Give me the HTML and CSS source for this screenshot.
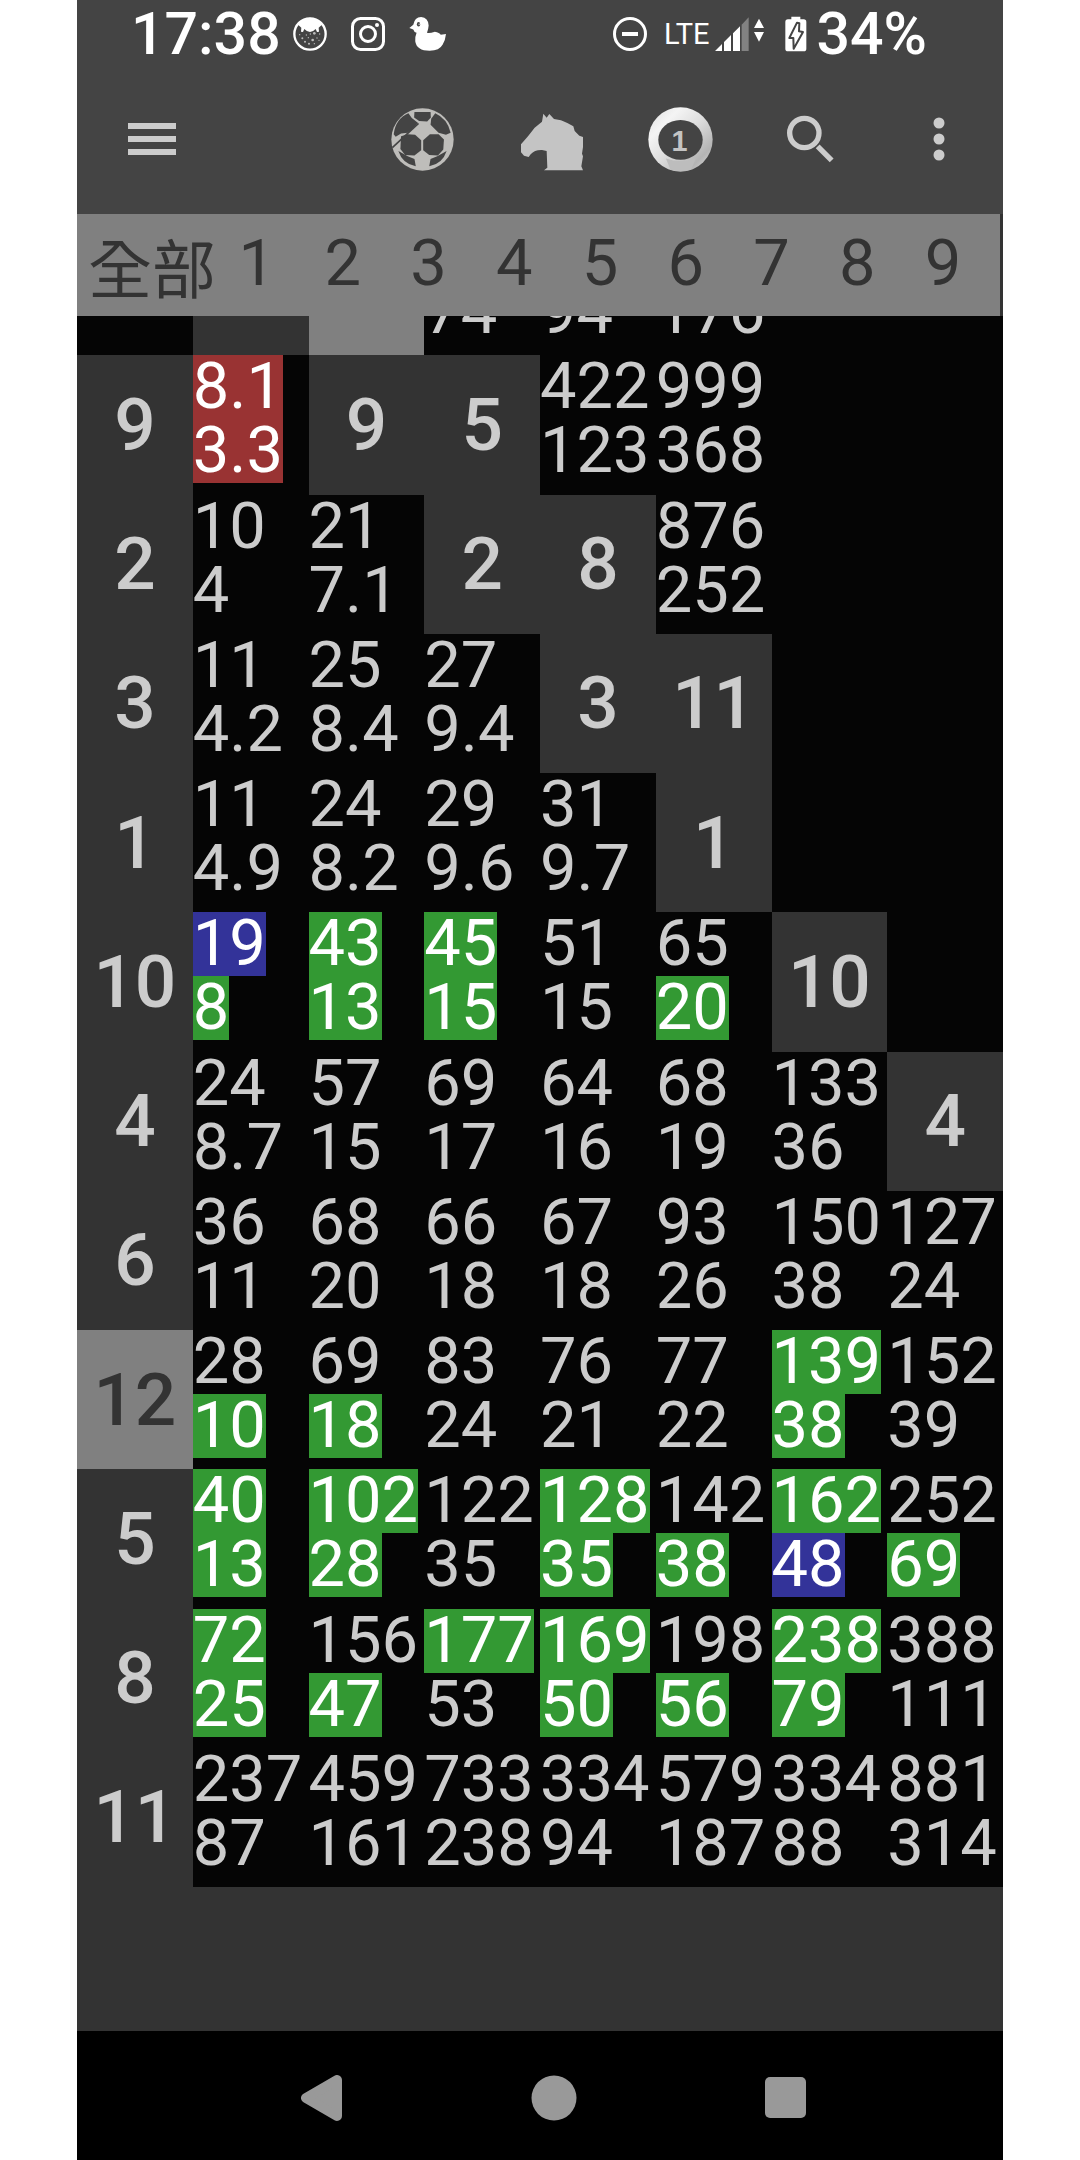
FILE: index.html
```html
<!DOCTYPE html>
<html lang="zh-Hant">
<head>
  <meta charset="utf-8">
  <meta name="viewport" content="width=device-width, initial-scale=1">
  <title>全部</title>
  <link rel="stylesheet" href="styles.css">
</head>
<body>
  <div class="phone">
    <div class="status">
      <span class="clock">17:38</span>
      <div class="notices">
        <svg width="34" height="34" viewBox="698 50 102 102">
          <circle cx="749" cy="101" r="47" fill="none" stroke="#fff" stroke-width="7"/>
          <path d="M706 84Q722 52 749 52Q776 52 792 84L784 74L775 82L776 94L770 95L766 86Q749 104 732 86L728 95L722 94L723 82L714 74Z" fill="#fff"/>
          <g fill="#bbb">
            <circle cx="718" cy="103" r="2"/><circle cx="726" cy="114" r="3"/><circle cx="738" cy="104" r="2"/>
            <circle cx="750" cy="101" r="2"/><circle cx="762" cy="99" r="4"/><circle cx="778" cy="101" r="2"/>
            <circle cx="744" cy="112" r="2"/><circle cx="757" cy="119" r="4"/><circle cx="770" cy="113" r="2"/>
            <circle cx="734" cy="124" r="3"/><circle cx="746" cy="130" r="3"/><circle cx="762" cy="130" r="2"/>
            <circle cx="776" cy="120" r="2"/>
          </g>
        </svg>
        <svg width="34" height="34" viewBox="0 0 34 34" fill="none" stroke="#fff">
          <rect x="1.5" y="1.5" width="31" height="31" rx="8" stroke-width="3"/>
          <circle cx="17" cy="17" r="7.5" stroke-width="3"/>
          <circle cx="26" cy="8" r="2" fill="#fff" stroke="none"/>
        </svg>
        <svg width="38" height="34" viewBox="1048 50 114 104">
          <path d="M1048 84L1060 74Q1064 50 1084 50Q1106 52 1107 76Q1106 88 1102 98Q1110 100 1126 95Q1140 98 1144 104L1160 102Q1158 122 1150 134Q1140 153 1110 153Q1070 153 1066 124Q1065 110 1070 98Q1062 96 1060 88Z" fill="#fff"/>
          <ellipse cx="1076" cy="72" rx="5" ry="7" fill="#444"/>
          <circle cx="1078" cy="72" r="2" fill="#fff"/>
        </svg>
      </div>
      <svg class="dnd" width="34" height="34" viewBox="0 0 34 34" fill="none" stroke="#fff">
        <circle cx="17" cy="17" r="15.5" stroke-width="3"/>
        <path d="M9 17H25" stroke-width="4"/>
      </svg>
      <span class="lte">LTE</span>
      <svg class="signal" width="50" height="36" viewBox="525 50 150 104">
        <path d="M525 153L546 132V153ZM552 126L573 105V153H552ZM579 100L600 79V153H579Z" fill="#fff"/>
        <path d="M605 74L626 52V153H605Z" fill="#828282"/>
        <path d="M657 56L672 84H642ZM657 125L642 96H672Z" fill="#fff"/>
      </svg>
      <svg class="battery" width="22" height="36" viewBox="734 49 66 106">
        <path d="M753 50H780V58H790Q798 58 798 66V146Q798 154 790 154H743Q735 154 735 146V66Q735 58 743 58H753Z" fill="#fff"/>
        <path d="M770 68L747 114L759 114L760 146L788 96L776 94L777 70Z" fill="#fff" stroke="#444" stroke-width="6" stroke-linejoin="round"/>
      </svg>
      <span class="percent">34%</span>
    </div>

    <header class="toolbar">
      <button class="menu" aria-label="Menu">
        <svg width="50" height="34" viewBox="0 0 50 34"><path d="M1 4H49M1 17H49M1 30H49" stroke="#ccc" stroke-width="6"/></svg>
      </button>
      <button aria-label="Football">
        <svg width="63" height="63" viewBox="98 80 188 188">
          <circle cx="192" cy="174" r="93" fill="#bebdba"/>
          <g fill="#444">
            <path d="M168 92H216L217 108L206 120L182 119L167 108Z"/>
            <path d="M150 96L160 110L178 124L168 136L148 154L128 156L112 166L106 158Q112 112 150 96Z"/>
            <path d="M230 96Q266 112 276 154L262 160L240 154L216 130L218 112Z"/>
            <path d="M128 164L148 158L170 160L188 176V206L168 222L140 220L126 202Z"/>
            <path d="M214 158L240 158L256 174L254 204L238 222L212 220L194 206V176Z"/>
            <path d="M120 208L148 224L168 232L172 254Q132 246 120 208Z"/>
            <path d="M264 208L236 224L216 232L212 254Q252 246 264 208Z"/>
          </g>
          <path d="M102 198L180 126" stroke="#444" stroke-width="5"/>
        </svg>
      </button>
      <button aria-label="Horse racing">
        <svg width="64" height="64" viewBox="487 80 190 192">
          <path d="M556 100L566 112L574 101L588 116Q610 118 628 128L646 138L650 152L664 166L675 170V200L672 220L675 228L670 258L675 270H558L568 262L566 212L552 209Q530 208 518 222L512 230L498 226L489 216V192L510 168L530 142L552 124Z" fill="#c4c4c4"/>
        </svg>
      </button>
      <button aria-label="Mark Six">
        <svg width="65" height="65" viewBox="866 79 196 196">
          <defs>
            <linearGradient id="ring" x1="0" y1="0" x2="1" y2="1">
              <stop offset="0" stop-color="#dcdcdc"/>
              <stop offset="0.25" stop-color="#f4f4f4"/>
              <stop offset="0.5" stop-color="#dedede"/>
              <stop offset="0.8" stop-color="#b4b4b4"/>
              <stop offset="1" stop-color="#e4e4e4"/>
            </linearGradient>
          </defs>
          <circle cx="964" cy="177" r="97" fill="url(#ring)"/>
          <path d="M920 234Q964 250 1010 234L996 268Q964 276 934 268Z" fill="#bdbdbd"/>
          <ellipse cx="964" cy="178" rx="67" ry="60" fill="#444"/>
          <text class="ball-number" x="961" y="212" text-anchor="middle">1</text>
        </svg>
      </button>
      <button aria-label="Search">
        <svg width="50" height="50" viewBox="133 100 150 150" fill="none" stroke="#ccc" stroke-width="16">
          <circle cx="191" cy="157" r="44"/>
          <path d="M231 197L273 239"/>
        </svg>
      </button>
      <button aria-label="More">
        <svg width="12" height="46" viewBox="0 0 12 46" fill="#ccc">
          <circle cx="6" cy="7" r="5.5"/><circle cx="6" cy="23" r="5.5"/><circle cx="6" cy="39" r="5.5"/>
        </svg>
      </button>
    </header>

    <nav class="races">
      <button class="all">全部</button>
      <button>1</button>
      <button>2</button>
      <button>3</button>
      <button>4</button>
      <button>5</button>
      <button>6</button>
      <button>7</button>
      <button>8</button>
      <button>9</button>
    </nav>

    <main class="board">
      <table class="odds">
        <tr>
          <td></td><th></th><th class="picked"></th>
          <td><span></span><span>74</span></td><td><span></span><span>94</span></td><td><span></span><span>176</span></td><td></td><td></td>
        </tr>
        <tr>
          <th>9</th>
          <td><span class="red">8.1</span><span class="red">3.3</span></td><th>9</th><th>5</th>
          <td><span>422</span><span>123</span></td><td><span>999</span><span>368</span></td><td></td><td></td>
        </tr>
        <tr>
          <th>2</th>
          <td><span>10</span><span>4</span></td><td><span>21</span><span>7.1</span></td><th>2</th><th>8</th>
          <td><span>876</span><span>252</span></td><td></td><td></td>
        </tr>
        <tr>
          <th>3</th>
          <td><span>11</span><span>4.2</span></td><td><span>25</span><span>8.4</span></td><td><span>27</span><span>9.4</span></td>
          <th>3</th><th>11</th><td></td><td></td>
        </tr>
        <tr>
          <th>1</th>
          <td><span>11</span><span>4.9</span></td><td><span>24</span><span>8.2</span></td><td><span>29</span><span>9.6</span></td>
          <td><span>31</span><span>9.7</span></td><th>1</th><td></td><td></td>
        </tr>
        <tr>
          <th>10</th>
          <td><span class="blue">19</span><span class="green">8</span></td>
          <td><span class="green">43</span><span class="green">13</span></td>
          <td><span class="green">45</span><span class="green">15</span></td>
          <td><span>51</span><span>15</span></td>
          <td><span>65</span><span class="green">20</span></td>
          <th>10</th><td></td>
        </tr>
        <tr>
          <th>4</th>
          <td><span>24</span><span>8.7</span></td><td><span>57</span><span>15</span></td><td><span>69</span><span>17</span></td>
          <td><span>64</span><span>16</span></td><td><span>68</span><span>19</span></td><td><span>133</span><span>36</span></td>
          <th>4</th>
        </tr>
        <tr>
          <th>6</th>
          <td><span>36</span><span>11</span></td><td><span>68</span><span>20</span></td><td><span>66</span><span>18</span></td>
          <td><span>67</span><span>18</span></td><td><span>93</span><span>26</span></td><td><span>150</span><span>38</span></td>
          <td><span>127</span><span>24</span></td>
        </tr>
        <tr>
          <th class="picked">12</th>
          <td><span>28</span><span class="green">10</span></td>
          <td><span>69</span><span class="green">18</span></td>
          <td><span>83</span><span>24</span></td>
          <td><span>76</span><span>21</span></td>
          <td><span>77</span><span>22</span></td>
          <td><span class="green">139</span><span class="green">38</span></td>
          <td><span>152</span><span>39</span></td>
        </tr>
        <tr>
          <th>5</th>
          <td><span class="green">40</span><span class="green">13</span></td>
          <td><span class="green">102</span><span class="green">28</span></td>
          <td><span>122</span><span>35</span></td>
          <td><span class="green">128</span><span class="green">35</span></td>
          <td><span>142</span><span class="green">38</span></td>
          <td><span class="green">162</span><span class="blue">48</span></td>
          <td><span>252</span><span class="green">69</span></td>
        </tr>
        <tr>
          <th>8</th>
          <td><span class="green">72</span><span class="green">25</span></td>
          <td><span>156</span><span class="green">47</span></td>
          <td><span class="green">177</span><span>53</span></td>
          <td><span class="green">169</span><span class="green">50</span></td>
          <td><span>198</span><span class="green">56</span></td>
          <td><span class="green">238</span><span class="green">79</span></td>
          <td><span>388</span><span>111</span></td>
        </tr>
        <tr>
          <th>11</th>
          <td><span>237</span><span>87</span></td><td><span>459</span><span>161</span></td><td><span>733</span><span>238</span></td>
          <td><span>334</span><span>94</span></td><td><span>579</span><span>187</span></td><td><span>334</span><span>88</span></td>
          <td><span>881</span><span>314</span></td>
        </tr>
      </table>
    </main>

    <div class="system">
      <button aria-label="Back">
        <svg width="42" height="46" viewBox="0 0 42 46"><path d="M36 5V41L5 23Z" fill="#999" stroke="#999" stroke-width="10" stroke-linejoin="round"/></svg>
      </button>
      <button aria-label="Home">
        <svg width="46" height="46" viewBox="0 0 46 46"><circle cx="23" cy="23" r="22.5" fill="#999"/></svg>
      </button>
      <button aria-label="Recent apps">
        <svg width="41" height="41" viewBox="0 0 41 41"><rect width="41" height="41" rx="5" fill="#999"/></svg>
      </button>
    </div>
  </div>
</body>
</html>
```

FILE: styles.css
```css
* {
  box-sizing: border-box;
}

body {
  margin: 0;
  padding: 0 77px;
  background: #fff;
  font-family: Roboto, "Noto Sans CJK TC", sans-serif;
}

button {
  display: flex;
  align-items: center;
  justify-content: center;
  padding: 0;
  border: none;
  background: none;
  color: inherit;
  font: inherit;
  cursor: pointer;
}

svg {
  display: block;
  flex: none;
}

.phone {
  display: flex;
  flex-direction: column;
  height: 100vh;
  background: #333;
  color: #ccc;
}

/* status bar */
.status {
  display: flex;
  align-items: center;
  flex: none;
  height: 68px;
  padding: 0 76px 0 54px;
  background: #444;
  color: #fff;
  font-size: 59px;
  font-weight: 500;
  line-height: 68px;
}

.notices {
  display: flex;
  gap: 24px;
  margin-left: 12px;
}

.dnd {
  margin-left: auto;
}

.lte {
  margin: 0 6px 0 17px;
  font-family: "Liberation Sans Narrow", Roboto, sans-serif;
  font-size: 29px;
  font-weight: 400;
}

.battery {
  margin: 0 9px 0 20px;
}

/* toolbar */
.toolbar {
  display: flex;
  flex: none;
  height: 146px;
  padding-bottom: 4px;
  background: #444;
}

.toolbar button {
  width: 129px;
}

.toolbar .menu {
  width: 150px;
  margin-right: auto;
}

.ball-number {
  font-family: "Liberation Sans", sans-serif;
  font-size: 87px;
  font-weight: bold;
  fill: #c4c4c4;
}

/* race tabs */
.races {
  display: grid;
  grid-template-columns: 126px repeat(9, 1fr);
  flex: none;
  height: 102px;
  margin-right: 3px;
  padding: 0 14px 0 11px;
  background: #808080;
  color: #333;
  font-size: 65px;
}

.races button {
  padding-bottom: 4px;
  line-height: 90px;
}

.races .all {
  justify-content: flex-start;
  padding: 14px 0 0;
  font-size: 64px;
  line-height: 80px;
  white-space: nowrap;
}

/* odds board, scrolled to the last row */
.board {
  display: flex;
  flex-direction: column;
  justify-content: flex-end;
  flex: 1;
  min-height: 0;
  padding-bottom: 144px;
  overflow: hidden;
}

.odds {
  flex: none;
  width: 100%;
  height: 1671px;
  table-layout: fixed;
  border-collapse: collapse;
  background: #050505;
}

.odds th,
.odds td {
  padding: 0;
}

.odds th {
  background: #333;
  font-size: 73px;
  font-weight: 500;
  line-height: 80px;
}

.odds .picked {
  background: #808080;
  color: #333;
}

.odds td {
  vertical-align: top;
  font-size: 65px;
  line-height: 62px;
}

.odds span {
  display: block;
  width: fit-content;
  height: 64px;
}

.red,
.green,
.blue {
  color: #fff;
}

.red {
  background: #993333;
}

.green {
  background: #339933;
}

.blue {
  background: #333399;
}

/* system buttons */
.system {
  display: flex;
  flex: none;
  height: 129px;
  padding: 4px 102px 0 129px;
  background: #000;
}

.system button {
  flex: 1;
}
```
